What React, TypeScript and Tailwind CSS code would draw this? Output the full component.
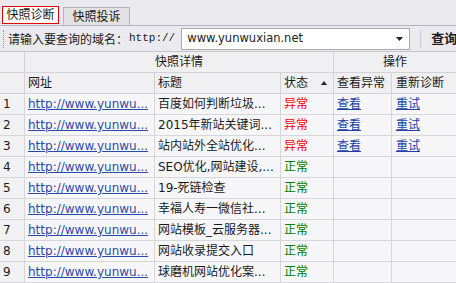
import React from 'react';

type Row = {
  title: string;
  bad: boolean;
};

const rows: Row[] = [
  { title: '百度如何判断垃圾...', bad: true },
  { title: '2015年新站关键词...', bad: true },
  { title: '站内站外全站优化...', bad: true },
  { title: 'SEO优化,网站建设,...', bad: false },
  { title: '19-死链检查', bad: false },
  { title: '幸福人寿一微信社...', bad: false },
  { title: '网站模板_云服务器...', bad: false },
  { title: '网站收录提交入口', bad: false },
  { title: '球磨机网站优化案...', bad: false },
];

const font = { fontFamily: '"DejaVu Sans", "Noto Sans CJK SC", sans-serif' };

function App() {
  return (
    <div className="w-[456px] h-[283px] overflow-hidden bg-[#ebebef] text-[12px] text-[#1a1a1a]" style={font}>
      {/* tabs */}
      <div className="h-[26px] flex items-end gap-[4px] pl-[2px] border-b border-[#b4b4bc]">
        <div className="h-[18px] w-[57px] mb-[1px] flex items-center justify-center bg-white border border-[#e00000] leading-none">
          快照诊断
        </div>
        <div className="h-[18px] w-[67px] flex items-center justify-center bg-[#e2e2e6] border border-b-0 border-[#b4b4bc] leading-none">
          快照投诉
        </div>
      </div>

      {/* toolbar */}
      <div className="h-[26px] flex items-center whitespace-nowrap border-b border-[#c4c4ca]">
        <div className="shrink-0 w-[2px] h-[18px] ml-[3px] border-l border-dotted border-[#9a9aa2]" />
        <span className="shrink-0 ml-[3px] leading-none" style={{ fontFamily: '"Noto Sans CJK SC", sans-serif' }}>
          请输入要查询的域名：
        </span>
        <span className="shrink-0 ml-[1px] text-[11px] leading-none" style={{ fontFamily: '"Liberation Mono", monospace' }}>
          http://
        </span>
        <div className="shrink-0 ml-[6px] w-[229px] h-[22px] flex items-center bg-white border border-[#a9a9b0]">
          <span className="ml-[5px] text-[11.5px] text-[#222] flex-1 leading-none">www.yunwuxian.net</span>
          <svg width="7" height="4" viewBox="0 0 7 4" className="mr-[6px]">
            <path d="M0 0H7L3.5 4Z" fill="#222" />
          </svg>
        </div>
        <div className="shrink-0 ml-[10px] w-px h-[18px] bg-[#c8c8ce]" />
        <span className="shrink-0 ml-[10px] text-[13px] font-bold leading-none">查询</span>
      </div>

      {/* table */}
      <div className="grid grid-cols-[25px_130px_126px_53px_58px_64px] bg-white">
        <div className="h-[21px] bg-[#f0f0f3] border-r border-b border-[#d2d2d8]" />
        <div className="col-span-3 h-[21px] flex items-center justify-center bg-[#f0f0f3] border-r border-b border-[#d2d2d8]">
          快照详情
        </div>
        <div className="col-span-2 h-[21px] flex items-center justify-center bg-[#f0f0f3] border-b border-[#d2d2d8]">
          操作
        </div>

        <div className="h-[21px] bg-[#f0f0f3] border-r border-b border-[#d2d2d8]" />
        <div className="h-[21px] pl-[3px] flex items-center bg-[#f0f0f3] border-r border-b border-[#d2d2d8]">网址</div>
        <div className="h-[21px] pl-[3px] flex items-center bg-[#f0f0f3] border-r border-b border-[#d2d2d8]">标题</div>
        <div className="h-[21px] pl-[3px] pr-[6px] flex items-center justify-between bg-[#f0f0f3] border-r border-b border-[#d2d2d8]">
          <span>状态</span>
          <svg width="6" height="4" viewBox="0 0 6 4">
            <path d="M0 4H6L3 0Z" fill="#222" />
          </svg>
        </div>
        <div className="h-[21px] pl-[3px] flex items-center bg-[#f0f0f3] border-r border-b border-[#d2d2d8] whitespace-nowrap">查看异常</div>
        <div className="h-[21px] pl-[4px] flex items-center bg-[#f0f0f3] border-b border-[#d2d2d8] whitespace-nowrap">重新诊断</div>

        {rows.map((row, i) => (
          <React.Fragment key={i}>
            <div className="h-[21px] pl-[3px] flex items-center bg-[#f2f2f5] border-r border-b border-[#d6d6dc]">{i + 1}</div>
            <div className="h-[21px] pl-[3px] flex items-center bg-[#f7f7fa] border-r border-b border-[#d6d6dc] whitespace-nowrap">
              <span className="text-[#2b4aa8] underline">http://www.yunwu...</span>
            </div>
            <div className="h-[21px] pl-[3px] flex items-center bg-[#f7f7fa] border-r border-b border-[#d6d6dc] whitespace-nowrap overflow-hidden">
              {row.title}
            </div>
            <div className="h-[21px] pl-[3px] flex items-center bg-[#f7f7fa] border-r border-b border-[#d6d6dc]">
              {row.bad ? <span className="text-[#ff0000]">异常</span> : <span className="text-[#008000]">正常</span>}
            </div>
            <div className="h-[21px] pl-[3px] flex items-center bg-[#f7f7fa] border-r border-b border-[#d6d6dc]">
              {row.bad && <span className="text-[#2040a8] underline">查看</span>}
            </div>
            <div className="h-[21px] pl-[4px] flex items-center bg-[#f7f7fa] border-b border-[#d6d6dc]">
              {row.bad && <span className="text-[#2040a8] underline">重试</span>}
            </div>
          </React.Fragment>
        ))}
      </div>
    </div>
  );
}

export default App;
